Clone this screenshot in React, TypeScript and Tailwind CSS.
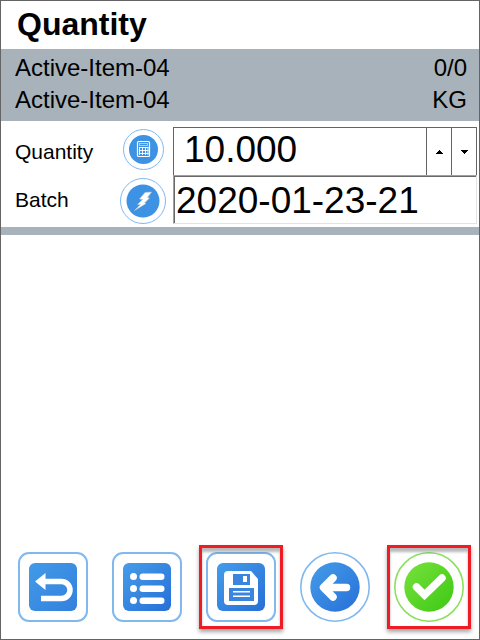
import { useState } from "react";
import type { ReactNode } from "react";

function CalculatorIcon() {
  return (
    <svg viewBox="0 0 41 41" className="size-[41px]" aria-hidden="true">
      <circle cx="20.5" cy="20.5" r="20" fill="#fff" stroke="#7fb8f0" />
      <circle cx="20.5" cy="20.5" r="14.5" fill="#3e92e4" />
      <rect x="14.5" y="12.5" width="12" height="15" rx="1" fill="none" stroke="#fff" strokeWidth="1.2" />
      <rect x="16.500" y="14.500" width="8" height="2" fill="none" stroke="#c3ddf7" strokeWidth="0.8" />
      <path d="M16 18.500h9.500M16 21.500h9.500M16 24.500h9.500M16.500 18v8M19.500 18v8M22.500 18v8M25 18v8" stroke="#fff" strokeWidth="0.9" />
    </svg>
  );
}

function BoltIcon() {
  return (
    <svg viewBox="0 0 46 46" className="size-[46px]" aria-hidden="true">
      <circle cx="23" cy="23" r="22.5" fill="#fff" stroke="#7fb8f0" />
      <circle cx="23" cy="23" r="16.5" fill="#3e92e4" />
      <path
        d="M25 14.500 31.500 14 27.500 19.500 29.500 20 24.500 25 26 25.500 14.500 32.500 20.500 26.500 17.500 26.500 22.500 21.500 19.500 21Z"
        fill="#fff"
        stroke="#c3c9cf"
        strokeWidth="0.6"
      />
    </svg>
  );
}

function Gradients() {
  return (
    <svg className="absolute size-0" aria-hidden="true">
      <defs>
        <linearGradient id="blue" x1="0" y1="0" x2="1" y2="1">
          <stop offset="0" stopColor="#459de9" />
          <stop offset="1" stopColor="#276fd8" />
        </linearGradient>
        <linearGradient id="softBlue" x1="0" y1="0" x2="1" y2="1">
          <stop offset="0" stopColor="#429ae8" />
          <stop offset="1" stopColor="#3380dd" />
        </linearGradient>
        <linearGradient id="green" x1="0" y1="0" x2="1" y2="1">
          <stop offset="0" stopColor="#78e23c" />
          <stop offset="1" stopColor="#3cc814" />
        </linearGradient>
      </defs>
    </svg>
  );
}

function Tile({ fill = "url(#blue)", children }: { fill?: string; children: ReactNode }) {
  return (
    <svg viewBox="0 0 70 70" className="size-[70px]" aria-hidden="true">
      <rect x="1" y="1" width="68" height="68" rx="10" fill="#fff" stroke="#81b9ef" strokeWidth="2" />
      <rect x="11" y="11" width="48" height="48" rx="6" fill={fill} />
      {children}
    </svg>
  );
}

function Disc({ fill, ring, children }: { fill: string; ring: string; children: ReactNode }) {
  return (
    <svg viewBox="0 0 70 70" className="size-[70px]" aria-hidden="true">
      <circle cx="35" cy="35" r="34.2" fill="#fff" stroke={ring} strokeWidth="1.6" />
      <circle cx="35" cy="35" r="24.7" fill={fill} />
      {children}
    </svg>
  );
}

function ActionButton({ label, marked = false, children }: { label: string; marked?: boolean; children: ReactNode }) {
  return (
    <button type="button" aria-label={label} className="relative size-[70px]">
      {children}
      {marked && (
        <span className="pointer-events-none absolute -inset-[7px] border-3 border-[#ee1c25] shadow-[0_3px_4px_rgba(0,0,0,0.35),inset_0_4px_3px_rgba(0,0,0,0.28)]" />
      )}
    </button>
  );
}

export default function App() {
  const [quantity, setQuantity] = useState("10.000");
  const [batch, setBatch] = useState("2020-01-23-21");
  const step = (by: number) => setQuantity((q) => ((parseFloat(q) || 0) + by).toFixed(3));

  return (
    <main className="flex min-h-screen flex-col border border-[#646464] bg-white font-['Liberation_Sans',Arial,sans-serif] text-black">
      <Gradients />
      <h1 className="pt-[5px] pb-[7px] pl-4 text-[32px] leading-9 font-bold">Quantity</h1>

      <section className="bg-[#a8b2ba] pt-[3px] pr-3 pb-[5px] pl-[14px] text-2xl leading-8">
        <div className="flex justify-between">
          <span>Active-Item-04</span>
          <span>0/0</span>
        </div>
        <div className="flex justify-between">
          <span>Active-Item-04</span>
          <span>KG</span>
        </div>
      </section>

      <form className="border-b-8 border-[#a8b2ba] pt-[6px] pr-[2px] pb-[3px]" onSubmit={(e) => e.preventDefault()}>
        <div className="flex h-12">
          <div className="flex w-[172px] shrink-0 items-center justify-between pr-[7px] pl-[14px]">
            <label htmlFor="quantity" className="pt-0.5 text-[21px] leading-6">Quantity</label>
            <button type="button" aria-label="Calculator" className="flex w-[46px] justify-center pb-1">
              <CalculatorIcon />
            </button>
          </div>
          <div className="flex min-w-0 flex-1 border border-b-0 border-[#646464]">
            <input
              id="quantity"
              inputMode="decimal"
              value={quantity}
              onChange={(e) => setQuantity(e.target.value)}
              className="min-w-0 flex-1 pb-1 pl-[10px] text-[37px] leading-10 outline-none"
            />
            <button type="button" aria-label="Increase" onClick={() => step(1)} className="flex w-[25px] items-center justify-center border-l border-[#646464]">
              <svg viewBox="0 0 7 4" className="h-1 w-[7px]" shapeRendering="crispEdges" aria-hidden="true"><path d="M3 0h1v1h1v1h1v1h1v1H0V3h1V2h1V1h1z" /></svg>
            </button>
            <button type="button" aria-label="Decrease" onClick={() => step(-1)} className="flex w-[25px] items-center justify-center border-l border-[#646464]">
              <svg viewBox="0 0 7 4" className="h-1 w-[7px]" shapeRendering="crispEdges" aria-hidden="true"><path d="M0 0h7v1H6v1H5v1H4v1H3V3H2V2H1V1H0z" /></svg>
            </button>
          </div>
        </div>
        <div className="flex h-[49px]">
          <div className="flex w-[172px] shrink-0 items-center justify-between pr-[7px] pl-[14px]">
            <label htmlFor="batch" className="text-[21px] leading-6">Batch</label>
            <button type="button" aria-label="Generate batch" className="pt-0.5">
              <BoltIcon />
            </button>
          </div>
          <div className="flex min-w-0 flex-1 border border-t-[#a0a0a0] border-r-[#e3e3e3] border-b-[#e3e3e3] border-l-[#a0a0a0]">
            <input
              id="batch"
              value={batch}
              onChange={(e) => setBatch(e.target.value)}
              className="min-w-0 flex-1 border-t border-l border-[#696969] pt-0.5 pl-px text-[37px] leading-10 outline-none"
            />
          </div>
        </div>
      </form>

      <footer className="mt-auto flex justify-between pt-4 pr-[15px] pb-[17px] pl-[17px]">
        <ActionButton label="Undo">
          <Tile fill="url(#softBlue)">
            <path d="M27 29.500H43.500a8.500 8.500 0 0 1 0 17H23" fill="none" stroke="#fff" strokeWidth="5.5" />
            <path d="M17 29.500 27.500 21V38Z" fill="#fff" />
          </Tile>
        </ActionButton>
        <ActionButton label="List">
          <Tile>
            <g fill="#fff">
              <circle cx="21.500" cy="24.500" r="3.500" />
              <circle cx="21.500" cy="36.500" r="3.500" />
              <circle cx="21.500" cy="48.500" r="3.500" />
              <rect x="27.500" y="21.500" width="25" height="6.500" rx="3.200" />
              <rect x="27.500" y="33.500" width="25" height="6.500" rx="3.200" />
              <rect x="27.500" y="45.500" width="25" height="6.500" rx="3.200" />
            </g>
          </Tile>
        </ActionButton>
        <ActionButton label="Save" marked>
          <Tile>
            <path d="M22 19H45L52 27V49a4 4 0 0 1-4 4H22a4 4 0 0 1-4-4V23a4 4 0 0 1 4-4Z" fill="#fff" />
            <path d="M27 22H44V33H27ZM23 36H48V49H23Z" fill="#3a86df" />
            <path d="M37 24h4v6h-4ZM27 39h17v1.500H27ZM27 43.500h17V45H27Z" fill="#fff" />
          </Tile>
        </ActionButton>
        <ActionButton label="Back">
          <Disc fill="url(#blue)" ring="#81b9ef">
            <path d="M46.500 35.500H25M33 26 23.500 35.500 33 45" fill="none" stroke="#fff" strokeWidth="7.500" strokeLinecap="round" strokeLinejoin="round" />
          </Disc>
        </ActionButton>
        <ActionButton label="Confirm" marked>
          <Disc fill="url(#green)" ring="#8be060">
            <path d="M22.500 35 30.500 43 48 26" fill="none" stroke="#fff" strokeWidth="7.500" strokeLinecap="round" strokeLinejoin="miter" />
          </Disc>
        </ActionButton>
      </footer>
    </main>
  );
}
